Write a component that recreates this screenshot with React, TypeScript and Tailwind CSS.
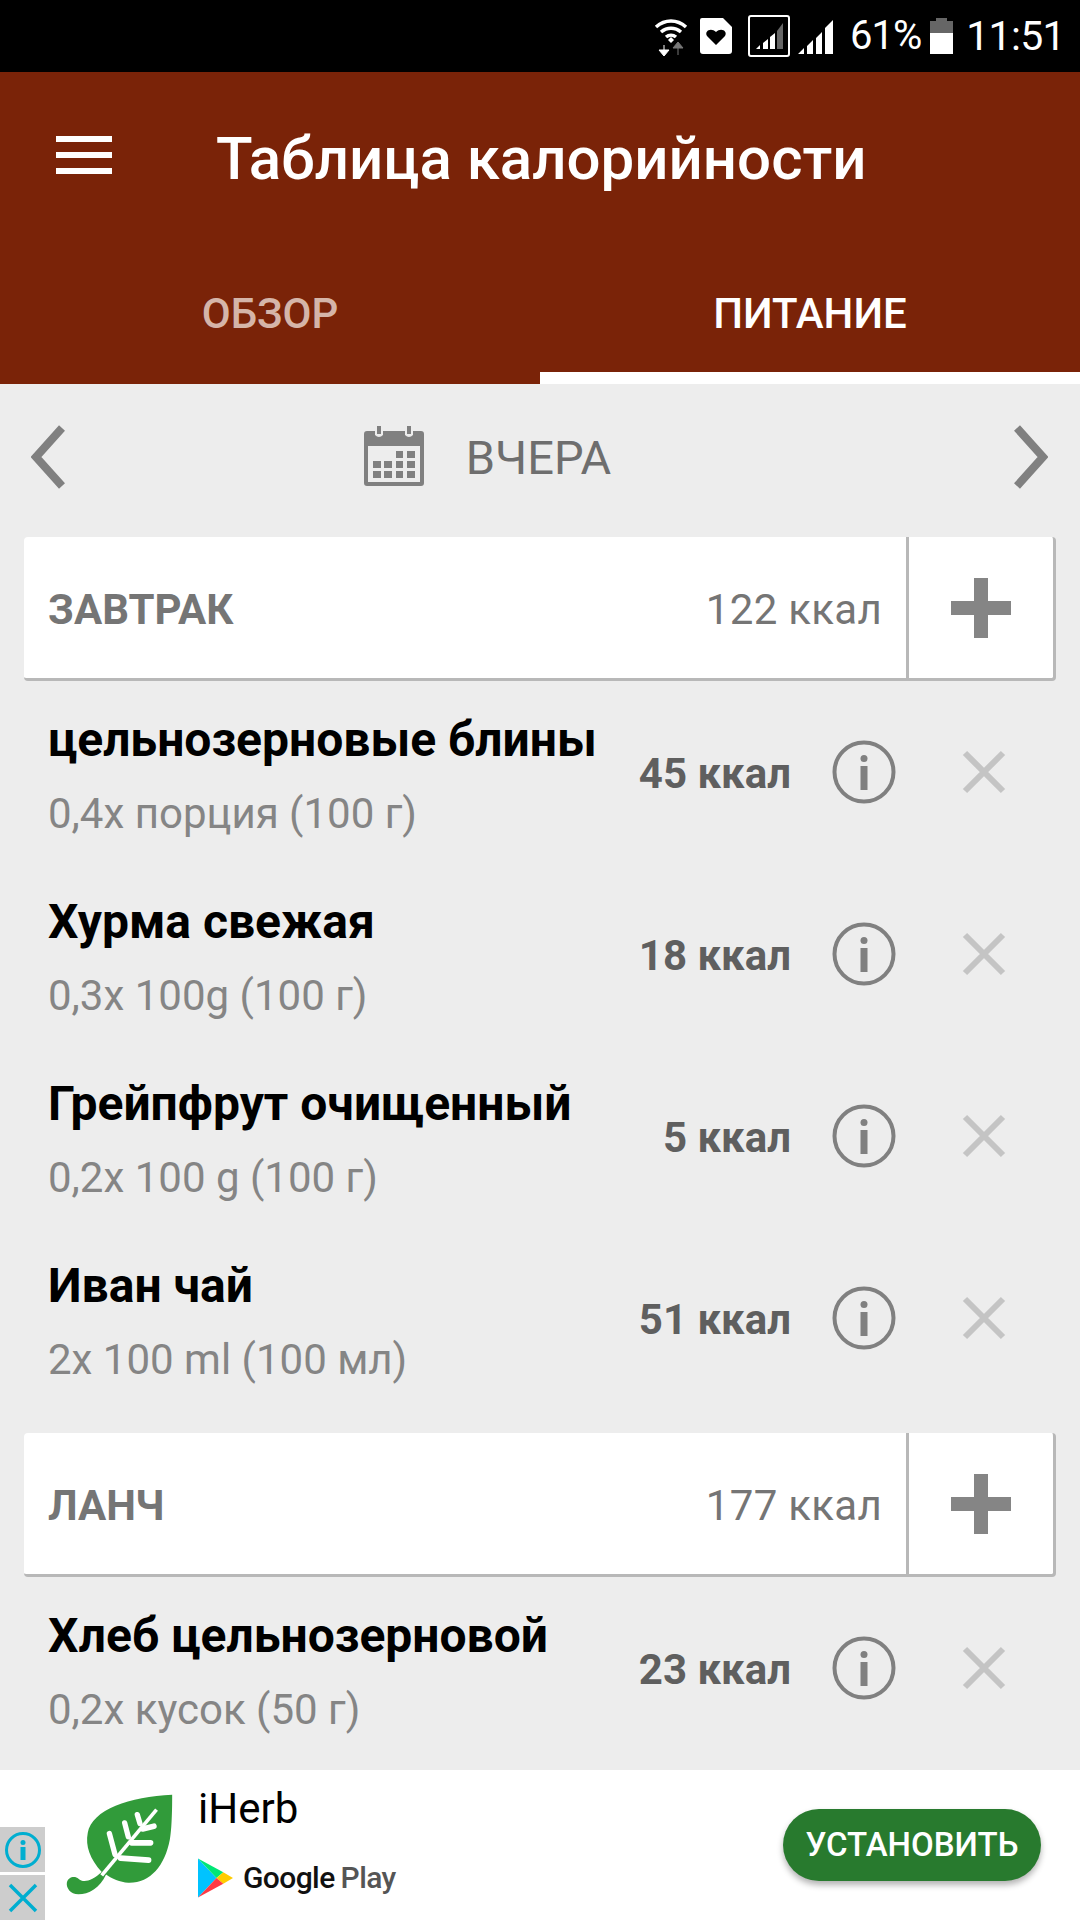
const font = { fontFamily: "Roboto, sans-serif" };

function StatusIcons() {
  return (
    <div className="flex items-center h-full">
      {/* wifi */}
      <svg width="34" height="40" viewBox="0 0 34 40" className="ml-[654px] mt-[2px] shrink-0">
        <path d="M2 10C11 2 23 2 32 10M7 15C13 10 21 10 27 15M12 20C15 17.500 19 17.500 22 20" fill="none" stroke="#fff" strokeWidth="3.500" />
        <path d="M14 23L17 20L20 23L17 26Z" fill="#fff" />
        <path d="M10 28V36M5 33L10 39L15 33Z" fill="#fff" stroke="#fff" strokeWidth="1" />
        <path d="M24 38V31M19 31L24 25L29 31Z" fill="#777" stroke="#777" strokeWidth="1" />
      </svg>
      {/* sim */}
      <svg width="32" height="36" viewBox="0 0 32 36" className="ml-[12px] shrink-0">
        <path d="M2 0H23L32 9V33Q32 36 29 36H3Q0 36 0 33V2Q0 0 2 0Z" fill="#fff" />
        <path d="M16 27L7 18C4 13 11 9 16 14C21 9 28 13 25 18Z" fill="#000" />
      </svg>
      {/* boxed signal */}
      <div className="ml-[16px] w-[42px] h-[42px] border-[2px] border-white rounded-[3px] shrink-0">
        <svg width="38" height="38" viewBox="0 0 38 38">
          <path d="M6 32H10V28Z M13 32H18V22L13 26Z M20 32H25V16L20 20Z" fill="#fff" />
          <path d="M27 32H33V6L27 14Z" fill="#666" />
        </svg>
      </div>
      {/* signal */}
      <svg width="36" height="36" viewBox="0 0 36 36" className="ml-[8px] shrink-0">
        <path d="M0 36H6V30Z M9 36H15V22L9 28Z M18 36H24V14L18 20Z M27 36H35V2L27 10Z" fill="#fff" />
      </svg>
      <span className="ml-[16px] text-[40px] leading-none text-white tracking-[-1px]" style={font}>61%</span>
      {/* battery */}
      <svg width="23" height="36" viewBox="0 0 23 36" className="ml-[9px] shrink-0">
        <path d="M0 3H6V0H17V3H23V15H0Z" fill="#666" />
        <rect y="15" width="23" height="21" fill="#fff" />
      </svg>
      <span className="ml-[13px] text-[41px] leading-none text-white tracking-[-0.7px]" style={font}>11:51</span>
    </div>
  );
}

function InfoIcon() {
  return (
    <svg width="64" height="64" viewBox="0 0 64 64" className="shrink-0">
      <circle cx="32" cy="32" r="29.500" fill="none" stroke="#808080" strokeWidth="4" />
      <circle cx="32" cy="18.500" r="3.500" fill="#808080" />
      <rect x="28.500" y="26" width="7" height="24" fill="#808080" />
    </svg>
  );
}

function CloseIcon() {
  return (
    <svg width="44" height="44" viewBox="0 0 44 44" className="shrink-0">
      <path d="M3 3L41 41M41 3L3 41" stroke="#c4c4c4" strokeWidth="6" />
    </svg>
  );
}

function MealCard({ title, kcal }: { title: string; kcal: string }) {
  return (
    <div className="ml-[24px] w-[1032px] h-[144px] flex bg-white rounded-[4px] border-b-[3px] border-r-[3px] border-[#b8b8b8] shrink-0">
      <span className="pl-[24px] self-center text-[42px] font-bold text-[#757575] flex-1 mt-[4px]" style={font}>{title}</span>
      <span className="pr-[24px] self-center text-[42px] tracking-[0.3px] text-[#757575] mt-[4px]" style={font}>{kcal}</span>
      <div className="w-[3px] bg-[#b8b8b8]" />
      <div className="flex-1 max-w-[144px] flex items-center justify-center">
        <svg width="60" height="60" viewBox="0 0 60 60">
          <path d="M23 0H37V23H60V37H37V60H23V37H0V23H23Z" fill="#858585" />
        </svg>
      </div>
    </div>
  );
}

function FoodRow({ name, portion, kcal }: { name: string; portion: string; kcal: string }) {
  return (
    <div className="h-[182px] flex items-center pl-[48px] shrink-0" style={font}>
      <div className="flex-1 min-w-0 mt-[6px]">
        <div className="text-[48px] font-bold text-black leading-[50px] whitespace-nowrap">{name}</div>
        <div className="text-[42px] text-[#858585] leading-[44px] mt-[27px]">{portion}</div>
      </div>
      <span className="text-[42px] font-bold text-[#5f5f5f] whitespace-nowrap mt-[2px]">{kcal}</span>
      <div className="ml-[41px] -mt-[1px]"><InfoIcon /></div>
      <div className="ml-[66px] mr-[74px] -mt-[1px]"><CloseIcon /></div>
    </div>
  );
}

export default function App() {
  return (
    <div className="relative w-[1080px] h-[1920px] flex flex-col overflow-hidden bg-[#ededed]">
      <div className="h-[72px] bg-black shrink-0">
        <StatusIcons />
      </div>

      <header className="h-[312px] bg-[#7a2308] flex flex-col shrink-0" style={font}>
        <div className="h-[176px] flex items-center pl-[56px]">
          <div className="w-[56px] flex flex-col gap-[10px] -mt-[10px]">
            <span className="h-[6px] bg-white" />
            <span className="h-[6px] bg-white" />
            <span className="h-[6px] bg-white" />
          </div>
          <h1 className="ml-[104px] text-[60px] font-medium text-white leading-none -mt-[2px]">Таблица калорийности</h1>
        </div>
        <div className="flex-1 flex">
          <div className="w-[540px] flex items-center justify-center pb-[6px] text-[42px] font-medium text-[#d5b5a9]">ОБЗОР</div>
          <div className="w-[540px] flex items-center justify-center pt-[6px] text-[42px] font-medium text-white border-b-[12px] border-white">ПИТАНИЕ</div>
        </div>
      </header>

      <div className="h-[153px] flex items-center pl-[31px] pr-[32px] shrink-0" style={font}>
        <svg width="35" height="64" viewBox="0 0 35 64" className="shrink-0 -mt-[8px]">
          <path d="M31 3L5 32L31 61" fill="none" stroke="#808080" strokeWidth="8" />
        </svg>
        <div className="flex-1 flex items-center justify-center -mt-[8px]">
          <svg width="60" height="60" viewBox="0 0 60 60" className="shrink-0 -mt-[2px]">
            <path d="M3 5H11V9Q15 13 19 9V5H41V9Q45 13 49 9V5H57Q60 5 60 8V57Q60 60 57 60H3Q0 60 0 57V8Q0 5 3 5ZM4 20V56H56V20Z" fill="#808080" fillRule="evenodd" />
            <path d="M13 0H17V8H13ZM43 0H47V8H43Z" fill="#808080" />
            <path d="M32 25H39V32H32ZM43 25H51V32H43ZM9 35H17V42H9ZM20 35H28V42H20ZM32 35H39V42H32ZM43 35H51V42H43ZM9 45H17V52H9ZM20 45H28V52H20ZM32 45H39V52H32ZM43 45H51V52H43Z" fill="#808080" />
          </svg>
          <span className="ml-[42px] mr-[104px] mt-[4px] text-[47px] text-[#6e6e6e]">ВЧЕРА</span>
        </div>
        <svg width="35" height="64" viewBox="0 0 35 64" className="shrink-0 -mt-[8px]">
          <path d="M4 3L30 32L4 61" fill="none" stroke="#808080" strokeWidth="8" />
        </svg>
      </div>

      <MealCard title="ЗАВТРАК" kcal="122 ккал" />
      <FoodRow name="цельнозерновые блины" portion="0,4x порция (100 г)" kcal="45 ккал" />
      <FoodRow name="Хурма свежая" portion="0,3x 100g (100 г)" kcal="18 ккал" />
      <FoodRow name="Грейпфрут очищенный" portion="0,2x 100 g (100 г)" kcal="5 ккал" />
      <FoodRow name="Иван чай" portion="2x 100 ml (100 мл)" kcal="51 ккал" />
      <div className="h-[24px] shrink-0" />
      <MealCard title="ЛАНЧ" kcal="177 ккал" />
      <FoodRow name="Хлеб цельнозерновой" portion="0,2x кусок (50 г)" kcal="23 ккал" />

      <div className="absolute left-0 bottom-0 w-[1080px] h-[150px] bg-white flex items-center" style={font}>
        <div className="absolute left-0 top-[57px] w-[45px] h-[45px] bg-[#cdcdcd] flex items-center justify-center">
          <svg width="38" height="38" viewBox="0 0 38 38">
            <circle cx="19" cy="19" r="16.500" fill="none" stroke="#00aed0" strokeWidth="3" />
            <circle cx="19" cy="11.500" r="2.500" fill="#00aed0" />
            <rect x="16.500" y="16" width="5" height="13" fill="#00aed0" />
          </svg>
        </div>
        <div className="absolute left-0 top-[105px] w-[45px] h-[45px] bg-[#cdcdcd] flex items-center justify-center">
          <svg width="32" height="32" viewBox="0 0 32 32">
            <path d="M3 3L29 29M29 3L3 29" stroke="#00aed0" strokeWidth="3.500" />
          </svg>
        </div>
        <svg width="110" height="103" viewBox="195 100 330 310" className="ml-[65px] -mt-[2px] shrink-0">
          <path d="M517 105C517 105 518 200 510 240C495 320 450 372 385 370C360 368 335 358 318 345C300 385 265 405 235 405C210 405 198 385 200 370C203 352 225 348 235 358C250 372 275 365 305 338C270 300 255 260 263 220C275 150 390 110 517 105Z" fill="#319b3a" />
          <path d="M305 348L470 150" fill="none" stroke="#fff" strokeWidth="11" />
          <path d="M345 285L328 222M385 232L374 190M420 192L412 165" fill="none" stroke="#fff" strokeWidth="16" strokeLinecap="round" />
          <path d="M362 296L446 302M395 250L452 250M428 208L462 200" fill="none" stroke="#fff" strokeWidth="17" strokeLinecap="round" />
        </svg>
        <div className="ml-[23px] self-start">
          <div className="text-[42px] text-black leading-none mt-[18px]">iHerb</div>
          <div className="flex items-center mt-[25px]">
            <svg width="35" height="40" viewBox="0 0 36 40" className="shrink-0">
              <path d="M0 0V40L19 20Z" fill="#00c3ff" />
              <path d="M0 0L26 14L19 20Z" fill="#00e676" />
              <path d="M26 14L36 20L26 26L19 20Z" fill="#ffcc00" />
              <path d="M0 40L26 26L19 20Z" fill="#ff3a44" />
            </svg>
            <span className="ml-[10px] text-[30px] font-medium text-[#111] tracking-[-0.6px]">Google</span>
            <span className="ml-[6px] text-[30px] font-medium text-[#555] tracking-[-0.6px]">Play</span>
          </div>
        </div>
        <div className="ml-auto mr-[39px] w-[258px] h-[72px] rounded-full bg-[#287a2e] flex items-center justify-center text-[33px] font-medium text-white shadow-[0_4px_6px_rgba(0,0,0,0.3)]">
          УСТАНОВИТЬ
        </div>
      </div>
    </div>
  );
}
